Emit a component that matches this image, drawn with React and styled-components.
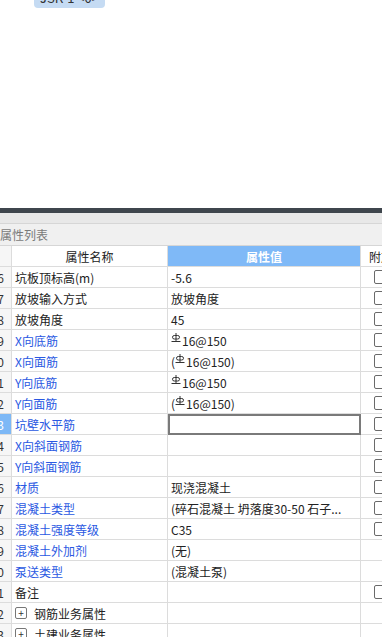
import styled, { createGlobalStyle } from 'styled-components'

const GlobalStyle = createGlobalStyle`
  html, body {
    margin: 0;
    padding: 0;
    background: #ffffff;
    overflow: hidden;
  }
  body {
    font-family: "Noto Sans CJK SC", "Noto Sans", sans-serif;
    font-size: 12px;
    color: #222;
  }
`

const Page = styled.div`
  width: 382px;
  height: 637px;
  display: flex;
  flex-direction: column;
  overflow: hidden;
`

const TopArea = styled.div`
  height: 208px;
  flex: none;
  background: #ffffff;
  padding-left: 34px;
  box-sizing: border-box;
`

const Pill = styled.div`
  display: flex;
  align-items: center;
  width: fit-content;
  height: 22px;
  margin-top: -14px;
  padding: 0 6px;
  background: #c5dbf3;
  border-radius: 4px;
  color: #333;
  font-size: 13px;
`

const DarkBar = styled.div`
  height: 5px;
  flex: none;
  background: #3f464d;
`

const Strip = styled.div`
  height: 10px;
  flex: none;
  background: #e8e8e8;
  border-bottom: 1px solid #d6d6d6;
`

const Title = styled.div`
  height: 21px;
  flex: none;
  display: flex;
  align-items: center;
  background: #f0f0f0;
  color: #7a7a7a;
  border-bottom: 1px solid #d6d6d6;
`

const Row = styled.div`
  display: grid;
  grid-template-columns: 12px 156px 193px 1fr;
  height: 21px;
  flex: none;
`

const Cell = styled.div`
  box-sizing: border-box;
  height: 21px;
  min-width: 0;
  border-right: 1px solid #dcdcdc;
  border-bottom: 1px solid #dcdcdc;
  display: flex;
  align-items: center;
  padding-left: 3px;
  white-space: nowrap;
  overflow: hidden;
  color: ${p => (p.$blue ? '#2a58e2' : '#222')};
`

const NumCell = styled(Cell)`
  padding: 0 7px 0 0;
  justify-content: flex-end;
  background: ${p => (p.$active ? '#7db8f6' : '#f6f6f6')};
  color: ${p => (p.$active ? '#ffffff' : '#333')};
`

const NumText = styled.span`
  flex: none;
`

const HeadCell = styled(Cell)`
  justify-content: center;
  padding: 0;
  background: ${p => (p.$active ? '#7fb9f7' : '#ffffff')};
  color: ${p => (p.$active ? '#ffffff' : '#222')};
  font-weight: ${p => (p.$active ? 600 : 400)};
`

const ExtraHead = styled(Cell)`
  padding-left: 8px;
  border-right: none;
`

const ValueCell = styled(Cell)`
  ${p => p.$selected && `
    outline: 2px solid #7a7a7a;
    outline-offset: -2px;
  `}
`

const ExtraCell = styled(Cell)`
  border-right: none;
  padding-left: 13px;
`

const Check = styled.span`
  display: inline-block;
  width: 11px;
  height: 12px;
  border: 1px solid #6a6a6a;
  border-radius: 2px;
  background: #fff;
  flex: none;
`

const Expander = styled.span`
  display: inline-flex;
  align-items: center;
  justify-content: center;
  width: 10px;
  height: 10px;
  border: 1px solid #777;
  border-radius: 2px;
  font-size: 10px;
  line-height: 1;
  color: #333;
  margin-right: 7px;
  flex: none;
`

const SteelMark = styled.svg`
  flex: none;
  margin: -5px 1px 0 0;
`

const Bar = () => (
  <SteelMark width="10" height="9" viewBox="0 0 10 9">
    <path d="M5 0V8.5M0.5 8.5H9.5" stroke="#333" strokeWidth="1" fill="none" />
    <rect x="1.5" y="2.5" width="7" height="3.5" rx="1.75" stroke="#333" strokeWidth="1" fill="none" />
  </SteelMark>
)

const Steel = ({ paren }) => (
  <>
    {paren && '('}
    <Bar />16@150{paren && ')'}
  </>
)

const rows = [
  { n: 6, name: '坑板顶标高(m)', value: '-5.6', check: true },
  { n: 7, name: '放坡输入方式', value: '放坡角度', check: true },
  { n: 8, name: '放坡角度', value: '45', check: true },
  { n: 9, name: 'X向底筋', blue: true, value: <Steel />, check: true },
  { n: 10, name: 'X向面筋', blue: true, value: <Steel paren />, check: true },
  { n: 11, name: 'Y向底筋', blue: true, value: <Steel />, check: true },
  { n: 12, name: 'Y向面筋', blue: true, value: <Steel paren />, check: true },
  { n: 13, name: '坑壁水平筋', blue: true, value: '', check: true, selected: true },
  { n: 14, name: 'X向斜面钢筋', blue: true, value: '', check: true },
  { n: 15, name: 'Y向斜面钢筋', blue: true, value: '', check: true },
  { n: 16, name: '材质', blue: true, value: '现浇混凝土', check: true },
  { n: 17, name: '混凝土类型', blue: true, value: '(碎石混凝土 坍落度30-50 石子...', check: true },
  { n: 18, name: '混凝土强度等级', blue: true, value: 'C35', check: true },
  { n: 19, name: '混凝土外加剂', blue: true, value: '(无)' },
  { n: 20, name: '泵送类型', blue: true, value: '(混凝土泵)' },
  { n: 21, name: '备注', value: '', check: true },
  { n: 22, name: '钢筋业务属性', group: true, value: '' },
  { n: 23, name: '土建业务属性', group: true, value: '' },
]

export default function App() {
  return (
    <Page>
      <GlobalStyle />
      <TopArea>
        <Pill>JSK-1 &lt;0&gt;</Pill>
      </TopArea>
      <DarkBar />
      <Strip />
      <Title>属性列表</Title>
      <Row>
        <NumCell />
        <HeadCell>属性名称</HeadCell>
        <HeadCell $active>属性值</HeadCell>
        <ExtraHead>附加</ExtraHead>
      </Row>
      {rows.map(r => (
        <Row key={r.n}>
          <NumCell $active={r.selected}>
            <NumText>{r.n}</NumText>
          </NumCell>
          <Cell $blue={r.blue}>
            {r.group && <Expander>+</Expander>}
            {r.name}
          </Cell>
          <ValueCell $selected={r.selected}>{r.value}</ValueCell>
          <ExtraCell>{r.check && <Check />}</ExtraCell>
        </Row>
      ))}
    </Page>
  )
}
